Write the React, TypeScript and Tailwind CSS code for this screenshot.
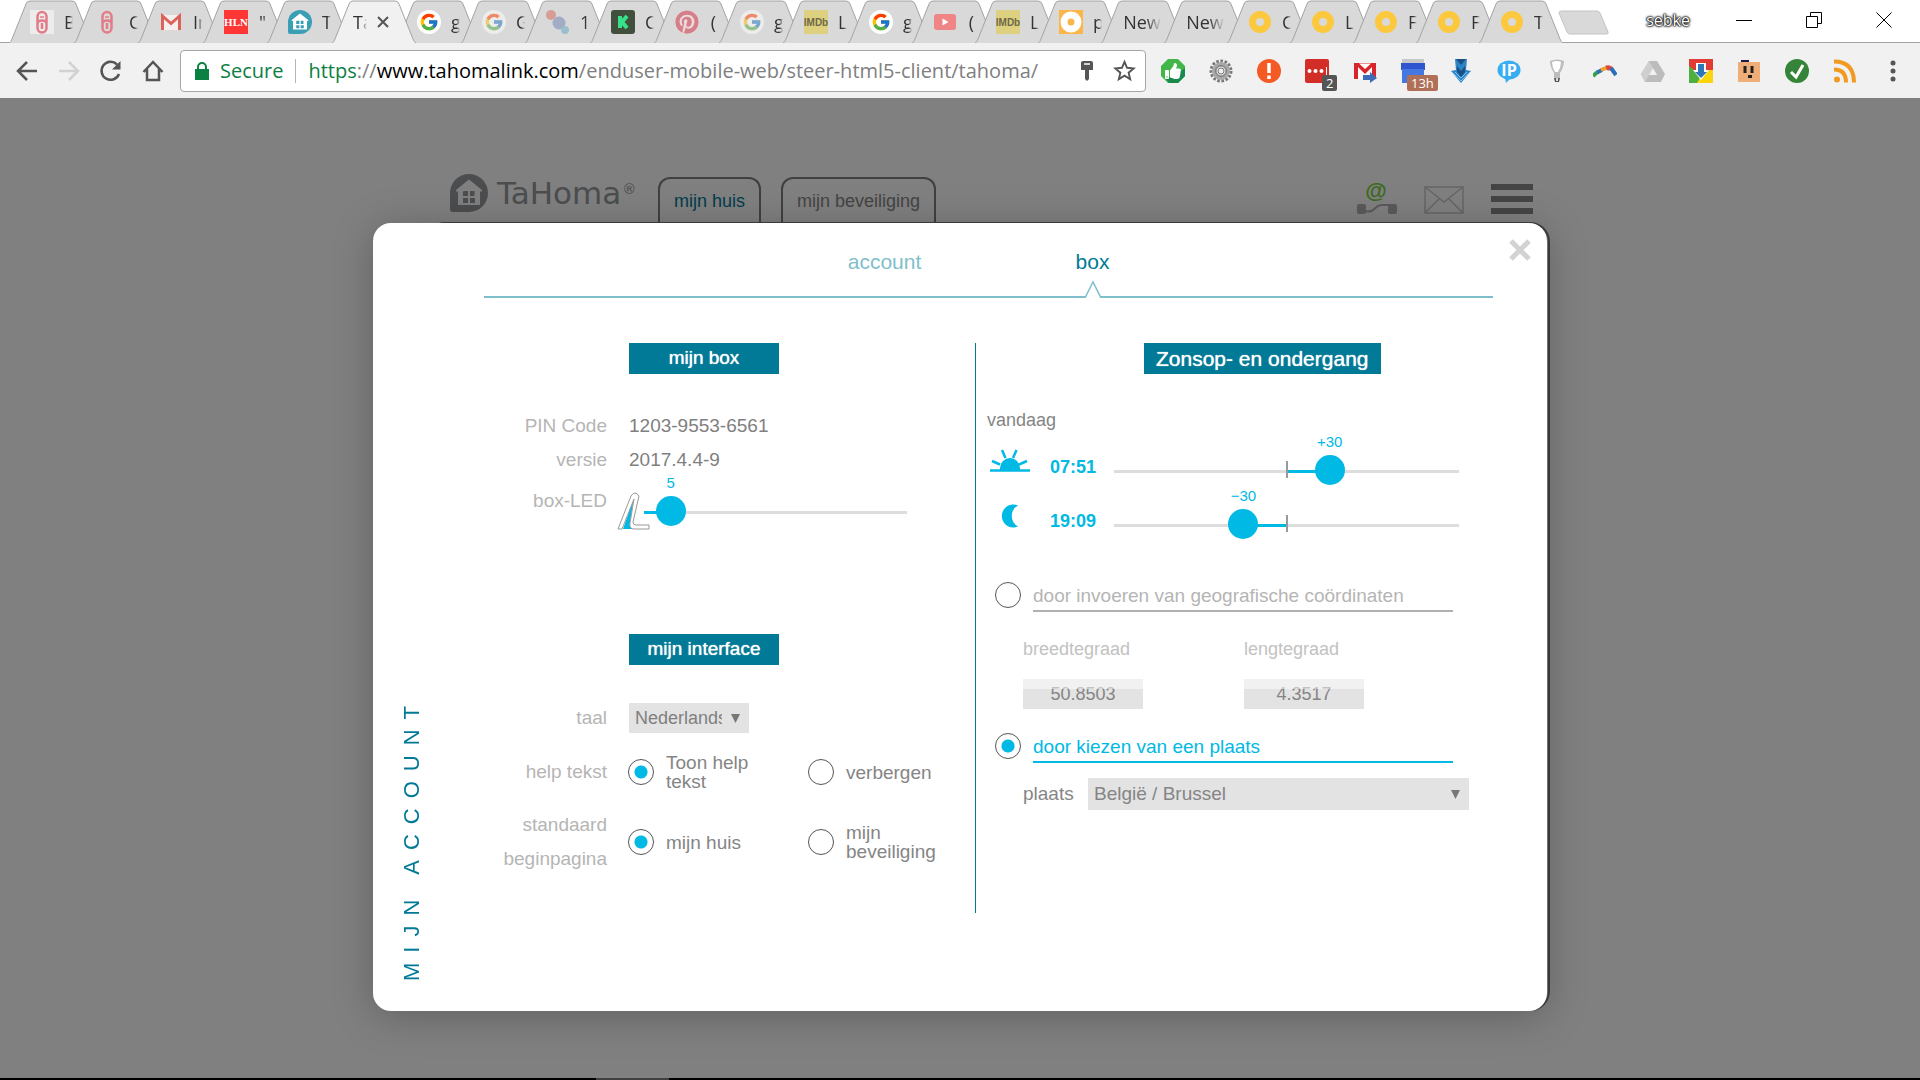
import React, { useState } from 'react';
import { FcGoogle } from 'react-icons/fc';
import { FaPinterest, FaThumbsUp } from 'react-icons/fa';

type TabItem = {
  title: string;
  icon?: React.ReactNode;
  active?: boolean;
};

const Clip = () => (
  <svg viewBox="0 0 24 24" className="size-6">
    <path
      d="M7.500 14V6.500a4.500 4.500 0 0 1 9 0V18a4.500 4.500 0 0 1-9 0v-4a4.500 3.500 0 0 1 9 0M12 13v6"
      fill="none"
      stroke="#e27c88"
      strokeWidth="2.500"
    />
    <path d="M10 7h4" stroke="#e27c88" strokeWidth="1.500" />
  </svg>
);

const Gmail = () => (
  <svg viewBox="0 0 24 24" className="size-6">
    <path d="M2 5h20v15H2z" fill="#f4efee" />
    <path d="M3.500 20V6l8.500 7.500L20.500 6v14" fill="none" stroke="#dc6158" strokeWidth="3" />
  </svg>
);

const Google = ({ faded = false }) => (
  <span
    className={`flex size-6 items-center justify-center rounded-full bg-white ${
      faded ? 'opacity-50' : ''
    }`}
  >
    <FcGoogle className="size-5" />
  </span>
);

const Imdb = () => (
  <span className="flex size-6 items-center justify-center overflow-hidden bg-[#ddd07e] font-['Liberation_Sans'] text-[10px] font-bold text-[#6d6848]">
    IMDb
  </span>
);

const Ring = () => (
  <svg viewBox="0 0 24 24" className="size-6">
    <circle cx="12" cy="12" r="7.500" fill="none" stroke="#fcc83e" strokeWidth="7" />
  </svg>
);

const House = ({ className = '', color = '#3a9fb4', inner = '#ffffff' }) => (
  <svg viewBox="0 0 38 38" className={className}>
    <path d="M19 0a19 19 0 0 1 0 38H3q-3 0-3-3V19A19 19 0 0 1 19 0z" fill={color} />
    <path d="M19 5.500 32 16v1.500h-2V31H8V17.500H6V16z" fill={inner} />
    <path
      d="M13.500 17h4.500v5h-5v-4zM20 17h4.500v5H20zM13 24h5v5h-5zM20 24h5v5h-5z"
      fill={color}
    />
  </svg>
);

const tabs: TabItem[] = [
  { title: 'B', icon: <span className="block bg-[#ececec]"><Clip /></span> },
  { title: 'C', icon: <Clip /> },
  { title: 'In', icon: <Gmail /> },
  {
    title: '"',
    icon: (
      <span className="flex size-6 items-center justify-center bg-[#ff3636] font-['Liberation_Serif'] text-[11px] font-bold text-white">
        HLN
      </span>
    )
  },
  { title: 'T', icon: <House className="size-6" /> },
  { title: 'Ta', active: true },
  { title: 'g', icon: <Google /> },
  { title: 'G', icon: <Google faded /> },
  {
    title: '1',
    icon: (
      <svg viewBox="0 0 24 24" className="size-6">
        <circle cx="5" cy="5" r="5" fill="#d79c94" />
        <circle cx="13" cy="13" r="6.500" fill="#a3acc6" />
        <circle cx="19" cy="20" r="4" fill="#9bbfcc" />
      </svg>
    )
  },
  {
    title: 'C',
    icon: (
      <svg viewBox="0 0 24 24" className="size-6">
        <rect width="24" height="24" rx="3" fill="#41503c" />
        <path d="M9 6v12M16 6l-5 6 5 6" fill="none" stroke="#37e28a" strokeWidth="4" />
      </svg>
    )
  },
  { title: '(', icon: <FaPinterest className="size-6 rounded-full bg-[#eed8da] text-[#d4808a]" /> },
  { title: 'g', icon: <Google faded /> },
  { title: 'L', icon: <Imdb /> },
  { title: 'g', icon: <Google /> },
  {
    title: '(',
    icon: (
      <svg viewBox="0 0 24 24" className="size-6">
        <rect x="1" y="4" width="22" height="16" rx="3" fill="#ef8585" />
        <path d="M9.500 8.500v7l6-3.500z" fill="#fff" />
      </svg>
    )
  },
  { title: 'L', icon: <Imdb /> },
  {
    title: 'p',
    icon: (
      <svg viewBox="0 0 24 24" className="size-6">
        <path d="M0 0h24v24H0z" fill="#fbb649" />
        <circle cx="12" cy="12" r="7" fill="none" stroke="#fff" strokeWidth="7" />
      </svg>
    )
  },
  { title: 'New' },
  { title: 'New' },
  { title: 'C', icon: <Ring /> },
  { title: 'L', icon: <Ring /> },
  { title: 'F', icon: <Ring /> },
  { title: 'F', icon: <Ring /> },
  { title: 'T', icon: <Ring /> }
];

const tabWidth = (index: number) => {
  if (index > 13) return 'w-[63px]';
  return index % 2 === 0 ? 'w-[65px]' : 'w-[64px]';
};

const BrowserTab = ({ tab, index }: { tab: TabItem; index: number }) => (
  <div
    className={`relative h-[43px] shrink-0 ${tabWidth(index)} ${tab.active ? 'z-10' : ''}`}
  >
    <svg
      viewBox="0 0 84 43"
      className="absolute top-0 left-0 h-[43px] w-[84px]"
      fill={tab.active ? '#f1f1f1' : '#d9d9d9'}
      stroke="#a3a3a3"
    >
      <path d="M0 43C2 42 2 41 3 39L17 4q1-3 4-3h42q3 0 4 3l14 35q1 3 3 4" />
    </svg>
    <button
      type="button"
      className="relative flex h-full w-[72px] items-center gap-[10px] pt-px pl-[21px] text-[18px] whitespace-nowrap text-[#333]"
    >
      {tab.icon && <span className="shrink-0">{tab.icon}</span>}
      <span
        className={`overflow-hidden mask-r-from-60% ${
          tab.icon ? 'w-[9px]' : tab.active ? 'w-[14px]' : 'w-10'
        }`}
      >
        {tab.title}
      </span>
      {tab.active && (
        <svg viewBox="0 0 12 12" className="size-3 shrink-0">
          <path d="m1 1 10 10M11 1 1 11" stroke="#555" strokeWidth="2" />
        </svg>
      )}
    </button>
  </div>
);

const TabStrip = () => (
  <div className="flex h-[43px] justify-between border-b border-[#a3a3a3] bg-white">
    <div className="flex pl-[9px]">
      {tabs.map((tab, index) => (
        <BrowserTab key={index} tab={tab} index={index} />
      ))}
      <button type="button" aria-label="New tab" className="mt-[10px] ml-4 h-[26px]">
        <svg viewBox="0 0 52 26" className="h-[26px] w-[52px]">
          <path
            d="M3 1h36q2 0 3 2l8 19q1 2-2 2H12q-2 0-3-2L1 3q0-2 2-2z"
            fill="#d9d9d9"
            stroke="#c4c4c4"
          />
        </svg>
      </button>
    </div>
    <div className="flex items-start pt-[10px] pr-7">
      <span className="mr-[46px] text-[16px] leading-5 text-white [text-shadow:0_0_1px_#000,0_0_2px_#000,0_0_2px_#000,0_0_3px_#000]">
        sebke
      </span>
      <div className="flex gap-[54px] pt-[2px]">
        <button type="button" aria-label="Minimize">
          <svg viewBox="0 0 16 16" className="size-4">
            <path d="M0 8.500h16" stroke="#000" />
          </svg>
        </button>
        <button type="button" aria-label="Restore">
          <svg viewBox="0 0 16 16" className="size-4" fill="none" stroke="#000">
            <path d="M.5 4.500h11v11H.5zM4.500 4V.5h11v11H12" />
          </svg>
        </button>
        <button type="button" aria-label="Close window">
          <svg viewBox="0 0 16 16" className="size-4">
            <path d="m.5.500 15 15M15.500.500l-15 15" stroke="#000" />
          </svg>
        </button>
      </div>
    </div>
  </div>
);

type Extension = { name: string; icon: React.ReactNode; badge?: string; badgeColor?: string };

const extensions: Extension[] = [
  {
    name: 'Adblock',
    icon: (
      <span className="relative flex size-6 items-center justify-center">
        <svg viewBox="0 0 24 24" className="absolute inset-0 size-6">
          <path d="M7 0h10l7 7v10l-7 7H7l-7-7V7z" fill="#43b649" />
          <path d="m24 9v8l-7 7H8L5 20l15-8z" fill="#178a4c" />
        </svg>
        <FaThumbsUp className="relative size-4 text-white" />
      </span>
    )
  },
  {
    name: 'Settings',
    icon: (
      <svg viewBox="0 0 24 24" className="size-6" fill="none">
        <circle cx="12" cy="12" r="10" stroke="#777" strokeWidth="3" strokeDasharray="2.600 1.600" />
        <circle cx="12" cy="12" r="6.500" stroke="#a9a9a9" strokeWidth="5" />
        <circle cx="12" cy="12" r="5.500" stroke="#7c7c7c" />
        <circle cx="12" cy="12" r="3" fill="#eee" stroke="#777" />
      </svg>
    )
  },
  {
    name: 'Alert',
    icon: (
      <svg viewBox="0 0 24 24" className="size-6">
        <circle cx="12" cy="12" r="12" fill="#f45a24" />
        <path d="M12 4v10M12 16.500v3.500" stroke="#fff" strokeWidth="3.500" />
      </svg>
    )
  },
  {
    name: 'Passwords',
    badge: '2',
    badgeColor: 'bg-[#555]',
    icon: (
      <svg viewBox="0 0 24 24" className="size-6">
        <rect width="24" height="24" rx="2" fill="#d32d27" />
        <circle cx="4.500" cy="12" r="2" fill="#fff" />
        <circle cx="10.500" cy="12" r="2" fill="#fff" />
        <circle cx="16.500" cy="12" r="2" fill="#fff" />
        <path d="M21.500 8v8" stroke="#fff" />
      </svg>
    )
  },
  {
    name: 'Mail',
    icon: (
      <svg viewBox="0 0 24 24" className="size-6">
        <path d="M1 4h22v16H1z" fill="#d8252b" />
        <path d="M5 20V8l7 7 7-7v12zM6 4.500h12L12 10z" fill="#fff" />
        <path d="M10 16h7v-3l7 6-7 5v-3h-7z" fill="#3d6db8" />
      </svg>
    )
  },
  {
    name: 'Calendar',
    badge: '13h',
    badgeColor: 'bg-[#b07058]',
    icon: (
      <svg viewBox="0 0 24 24" className="size-6">
        <path d="M1 0h22v5H1z" fill="#c8c8c8" />
        <path d="M0 4h24v7H0z" fill="#2f55cf" />
        <path d="M1 10h22v14H1z" fill="#4478e0" />
      </svg>
    )
  },
  {
    name: 'Download',
    icon: (
      <svg viewBox="0 0 24 24" className="size-6">
        <path d="M6 0h12l-1 11 5 1-10 12L2 12l5-1z" fill="#2c84c4" />
        <path d="M7 0h10l-5 6zM8 7l4 5 4-5v6l-4 5-4-5z" fill="#1c4f86" />
        <path d="m3 13 9 9 9-9M6 13l6 6 6-6" fill="none" stroke="#74c6ee" />
      </svg>
    )
  },
  {
    name: 'IP address',
    icon: (
      <svg viewBox="0 0 24 24" className="size-6">
        <ellipse cx="12" cy="11" rx="11.500" ry="9.500" fill="#38aef2" />
        <path d="m8 19 1 5 5-5z" fill="#38aef2" />
        <text x="12" y="17" textAnchor="middle" fontSize="16" fontWeight="700" fill="#fff">
          IP
        </text>
      </svg>
    )
  },
  {
    name: 'Lights',
    icon: (
      <svg viewBox="0 0 24 24" className="size-6">
        <path d="M5 2q7-3 14 0 0 6-4 12v5H9v-5Q5 8 5 2z" fill="#bdbdbd" />
        <path d="M7 3q5-2 9 0 0 5-3 10h-3Q7 8 7 3z" fill="#fff" />
        <path d="M9 19h6l-1 4h-4z" fill="#555" />
        <path d="M11 19h2v3h-2z" fill="#ddd" />
      </svg>
    )
  },
  {
    name: 'Boomerang',
    icon: (
      <svg viewBox="0 0 24 24" className="size-6" fill="none" strokeWidth="4">
        <path d="M0 17q3-3 5-4" stroke="#35a04a" />
        <path d="M4 13.500 9 11" stroke="#2c6fb5" />
        <path d="m8 11 5-2" stroke="#f2a22c" />
        <path d="M13 9q3-1 5 1" stroke="#d94a3a" strokeWidth="5" />
        <path d="m18 9 5 7" stroke="#2c6fb5" />
      </svg>
    )
  },
  {
    name: 'Drive',
    icon: (
      <svg viewBox="0 0 24 24" className="size-6">
        <path d="M8 2h8l8 13-4 8H4l-4-8z" fill="#bcbcbc" />
        <path d="m8 2 4 7-8 14-4-8z" fill="#cfcfcf" />
        <path d="m12 9 4 7H8z" fill="#f1f1f1" />
      </svg>
    )
  },
  {
    name: 'Chrome downloads',
    icon: (
      <svg viewBox="0 0 24 24" className="size-6">
        <path d="M0 0h24v11H0z" fill="#e23a35" />
        <path d="m0 7 12 9-3 8H0z" fill="#4caf3f" />
        <path d="M24 11v13H8l8-13z" fill="#fdd50f" />
        <path d="M7 4h10v7h3l-8 10-8-10h3z" fill="#fff" />
        <path d="M9 5h6v8h3l-6 6-6-6h3z" fill="#2f76b9" />
      </svg>
    )
  },
  {
    name: 'Box',
    icon: (
      <svg viewBox="0 0 24 24" className="size-6">
        <path d="M4 1h8v3H4z" fill="#1b1b4b" />
        <path d="M1 3h22v20H1z" fill="#efae78" />
        <path d="M8 7v7M15 7v7" stroke="#222" strokeWidth="3" />
        <path d="M11 16h4v3h-4z" fill="#222" />
      </svg>
    )
  },
  {
    name: 'Check',
    icon: (
      <svg viewBox="0 0 24 24" className="size-6">
        <circle cx="12" cy="12" r="12" fill="#36843a" />
        <path d="m6 13 5 5 7-12" fill="none" stroke="#fff" strokeWidth="3" />
      </svg>
    )
  },
  {
    name: 'RSS',
    icon: (
      <svg viewBox="0 0 24 24" className="size-6">
        <circle cx="4" cy="20.500" r="3" fill="#f19a22" />
        <path d="M1 10.500q12 0 12 13M1 2.500q20 0 20 21" fill="none" stroke="#f19a22" strokeWidth="4" />
      </svg>
    )
  }
];

const Toolbar = () => (
  <div className="flex h-[57px] items-center border-b-2 border-[#808080] bg-[#f1f1f1] pr-[3px] pl-[15px]">
    <div className="flex gap-[18px] pr-[15px] text-[#555]">
      <button type="button" aria-label="Back">
        <svg viewBox="0 0 24 24" className="size-6" fill="none" stroke="currentColor" strokeWidth="2.500">
          <path d="M22 12H3M12 3l-9 9 9 9" />
        </svg>
      </button>
      <button type="button" aria-label="Forward" className="text-[#d2d2d2]">
        <svg viewBox="0 0 24 24" className="size-6" fill="none" stroke="currentColor" strokeWidth="2.500">
          <path d="M2 12h19M12 3l9 9-9 9" />
        </svg>
      </button>
      <button type="button" aria-label="Reload">
        <svg viewBox="0 0 24 24" className="size-6" fill="none" stroke="currentColor" strokeWidth="2.500">
          <path d="M20 15a9 9 0 1 1-2-9.500" />
          <path d="M21.500 2v8.500H13z" fill="currentColor" stroke="none" />
        </svg>
      </button>
      <button type="button" aria-label="Home">
        <svg viewBox="0 0 24 24" className="size-6" fill="none" stroke="currentColor" strokeWidth="2.500">
          <path d="M2.500 13 12 3l9.500 10M6 10v11h12V10" />
        </svg>
      </button>
    </div>
    <div className="flex h-[42px] flex-1 items-center rounded-[4px] border border-[#a6a6a6] bg-white pr-[9px] pl-[14px] text-[20px] text-[#808080]">
      <svg viewBox="0 0 14 18" className="mr-[11px] h-[18px] w-[14px]">
        <path d="M0 7h14v11H0z" fill="#0b8043" />
        <path d="M3 8V5a4 4 0 0 1 8 0v3" fill="none" stroke="#0b8043" strokeWidth="2" />
      </svg>
      <span className="text-[#0b8043]">Secure</span>
      <span className="mx-3 h-6 w-px bg-[#b5b5b5]" />
      <a href="#tahoma" className="flex-1 overflow-hidden whitespace-nowrap">
        <span className="text-[#0b8043]">https</span>://
        <span className="text-black">www.tahomalink.com</span>
        /enduser-mobile-web/steer-html5-client/tahoma/
      </a>
      <button type="button" aria-label="Saved password" className="mr-[20px]">
        <svg viewBox="0 0 12 20" className="h-5 w-3">
          <path d="M0 2q0-2 2-2h8q2 0 2 2v7H8v9l-2 2-2-2V9H0z" fill="#555" />
          <path d="M3 3h6" stroke="#fff" strokeWidth="1.500" />
        </svg>
      </button>
      <button type="button" aria-label="Bookmark">
        <svg viewBox="0 0 24 24" className="size-[23px]">
          <path
            d="m12 3 2.700 6.200 6.800.600-5.200 4.500 1.600 6.700-5.900-3.600L6.100 21l1.600-6.700-5.200-4.500 6.800-.600z"
            fill="none"
            stroke="#555"
            strokeWidth="2"
          />
        </svg>
      </button>
    </div>
    <div className="flex pl-[3px]">
      {extensions.map((extension) => (
        <button
          key={extension.name}
          type="button"
          aria-label={extension.name}
          className="relative flex w-12 justify-center"
        >
          {extension.icon}
          {extension.badge && (
            <span
              className={`absolute top-4 left-[29px] rounded-[2px] px-1 text-[13px] leading-4 text-white ${
                extension.badge.length > 1 ? '-ml-[11px]' : ''
              } ${extension.badgeColor}`}
            >
              {extension.badge}
            </span>
          )}
        </button>
      ))}
      <button type="button" aria-label="Menu" className="flex w-12 justify-center">
        <svg viewBox="0 0 24 24" className="size-6" fill="#555">
          <circle cx="12" cy="4" r="2.500" />
          <circle cx="12" cy="12" r="2.500" />
          <circle cx="12" cy="20" r="2.500" />
        </svg>
      </button>
    </div>
  </div>
);

const SiteHeader = () => (
  <header className="flex h-[123px] w-full max-w-[1174px] items-end pr-[14px] pl-[77px]">
    <a href="#home" className="mb-[11px] flex items-center gap-[9px] text-[#4b4d4e]">
      <House className="size-[38px]" color="#4b4d4e" inner="#808080" />
      <span className="flex items-center font-['DejaVu_Sans'] text-[31px] leading-9">
        TaHoma<span className="ml-px pb-2 text-[14px] leading-5">®</span>
      </span>
    </a>
    <nav className="ml-auto flex gap-5 pr-[421px] text-[18px]">
      <a
        href="#huis"
        className="flex h-[46px] items-center rounded-t-[12px] border-2 border-b-0 border-[#404040] px-[14px] text-[#003d4b]"
      >
        mijn huis
      </a>
      <a
        href="#beveiliging"
        className="flex h-[46px] items-center rounded-t-[12px] border-2 border-b-0 border-[#404040] px-[14px] text-[#444]"
      >
        mijn beveiliging
      </a>
    </nav>
    <div className="mb-2 flex items-end gap-[27px]">
      <button type="button" aria-label="Verbinding">
        <svg viewBox="0 0 40 34" className="h-[34px] w-10">
          <text x="19" y="17" textAnchor="middle" fontSize="22" fontWeight="700" fill="#3b6b20">
            @
          </text>
          <path d="M8 30c10 3 10-7 17-6h8" fill="none" stroke="#5a5a5a" strokeWidth="2" />
          <rect y="23" width="9" height="10" rx="2" fill="#5a5a5a" />
          <rect x="31" y="23" width="9" height="10" rx="2" fill="#5a5a5a" />
        </svg>
      </button>
      <button type="button" aria-label="Berichten">
        <svg viewBox="0 0 40 29" className="h-[29px] w-10" fill="none" stroke="#666" strokeWidth="1.500">
          <path d="M1 1h38v26H1zM1 1l19 15L39 1M1 27l14-14M39 27 25 13" />
        </svg>
      </button>
      <button type="button" aria-label="Menu">
        <svg viewBox="0 0 42 32" className="h-8 w-[42px]">
          <path d="M0 4h42M0 16h42M0 28h42" stroke="#454545" strokeWidth="6" />
        </svg>
      </button>
    </div>
  </header>
);

type SliderProps = {
  label: string;
  min: number;
  max: number;
  initial: number;
  centered?: boolean;
};

const Slider = ({ label, min, max, initial, centered = false }: SliderProps) => {
  const [value, setValue] = useState(initial);
  const ratio = (value - min) / (max - min);
  const position = centered ? `${ratio * 100}%` : `calc(15px + (100% - 30px) * ${ratio})`;
  const sign = value < 0 ? '−' : value > 0 && centered ? '+' : '';
  const fill = centered
    ? {
        left: `${Math.min(ratio, 0.5) * 100}%`,
        width: `${Math.abs(ratio - 0.5) * 100}%`
      }
    : { left: 0, width: position };

  return (
    <div className="relative h-[30px] w-full">
      <div className="absolute inset-x-0 top-[15px] h-[3px] bg-[#ddd]" />
      <div className="absolute top-[15px] h-[3px] bg-[#00b9e4]" style={fill} />
      {centered && <div className="absolute top-[6px] left-1/2 -ml-px h-[17px] w-[2px] bg-[#999]" />}
      <output
        className="absolute -top-[23px] -translate-x-1/2 text-[15px] leading-5 text-[#00b9e4]"
        style={{ left: position }}
      >
        {sign}
        {Math.abs(value)}
      </output>
      <input
        type="range"
        aria-label={label}
        min={min}
        max={max}
        value={value}
        onChange={(e) => setValue(Number(e.target.value))}
        className={`absolute top-0 h-[30px] appearance-none bg-transparent [&::-webkit-slider-thumb]:size-[30px] [&::-webkit-slider-thumb]:appearance-none [&::-webkit-slider-thumb]:rounded-full [&::-webkit-slider-thumb]:bg-[#00b9e4] ${
          centered ? '-left-[15px] w-[calc(100%+30px)]' : 'left-0 w-full'
        }`}
      />
    </div>
  );
};

type RadioProps = {
  name: string;
  checked?: boolean;
  children: React.ReactNode;
};

const radioClass =
  'size-[26px] shrink-0 appearance-none rounded-full border border-[#555] checked:bg-[radial-gradient(circle,#00b9e4_6px,transparent_7px)]';

const Radio = ({ name, checked, children }: RadioProps) => (
  <label className="flex w-[180px] items-center gap-3 leading-[19px] text-[#858585]">
    <input type="radio" name={name} defaultChecked={checked} className={radioClass} />
    <span className="w-[96px]">{children}</span>
  </label>
);

const SectionTitle = ({ children }: { children: React.ReactNode }) => (
  <h2 className="flex h-[31px] min-w-[150px] items-center justify-center bg-[#007a96] px-3 text-white [text-shadow:0_0_1px_#fff]">
    {children}
  </h2>
);

const Row = ({ label, className, children }: { label: string; className: string; children: React.ReactNode }) => (
  <div className={`flex items-center ${className}`}>
    <span className="w-[123px] shrink-0 text-right leading-[34px] text-[#b5b5b5]">{label}</span>
    {children}
  </div>
);

const LedIcon = () => (
  <svg viewBox="0 0 33 38" className="h-[38px] w-[33px] shrink-0">
    <path d="M17 5 6 37h9l-2-6z" fill="#00b9e4" />
    <path
      d="M1 37 14 4q4-6 8 0l-6 26q0 3 3 3h13v4H16q-4-1-3-6l4-24L5 37z"
      fill="#fff"
      stroke="#999"
    />
  </svg>
);

const Arrow = () => (
  <svg viewBox="0 0 10 10" className="pointer-events-none absolute top-1/2 right-[9px] -mt-1 size-[9px]">
    <path d="M0 0h10L5 10z" fill="#777" />
  </svg>
);

const BoxSettings = () => (
  <section className="w-[491px] shrink-0 text-[19px]">
    <div className="flex pl-[145px]">
      <SectionTitle>mijn box</SectionTitle>
    </div>
    <div className="pt-[35px]">
      <Row label="PIN Code" className="h-[34px] gap-[22px]">
        <span className="text-[#808080]">1203-9553-6561</span>
      </Row>
      <Row label="versie" className="h-[34px] gap-[22px]">
        <span className="text-[#808080]">2017.4.4-9</span>
      </Row>
      <div className="flex h-12 items-center">
        <span className="w-[123px] shrink-0 text-right text-[#b5b5b5]">box-LED</span>
        <div className="relative ml-[37px] w-[263px] pt-5">
          <Slider label="box-LED" min={0} max={100} initial={5} />
          <div className="pointer-events-none absolute top-4 -left-[27px]">
            <LedIcon />
          </div>
        </div>
      </div>
    </div>
    <div className="flex pt-[109px] pl-[145px]">
      <SectionTitle>mijn interface</SectionTitle>
    </div>
    <div className="flex flex-col gap-[17px] pt-[35px]">
      <Row label="taal" className="h-9 gap-[22px]">
        <div className="relative">
          <select
            aria-label="taal"
            className="block h-[30px] w-[120px] appearance-none overflow-hidden bg-[#e3e3e3] pr-[27px] pl-[6px] text-[18px] text-[#808080]"
          >
            <option>Nederlands</option>
            <option>Français</option>
            <option>English</option>
          </select>
          <Arrow />
        </div>
      </Row>
      <Row label="help tekst" className="h-[38px] gap-[21px]">
        <div className="flex">
          <Radio name="help" checked>
            Toon help tekst
          </Radio>
          <Radio name="help">verbergen</Radio>
        </div>
      </Row>
      <Row label="standaard beginpagina" className="h-[68px] gap-[21px]">
        <div className="flex">
          <Radio name="start" checked>
            mijn huis
          </Radio>
          <Radio name="start">mijn beveiliging</Radio>
        </div>
      </Row>
    </div>
  </section>
);

const SunIcon = () => (
  <svg viewBox="0 0 40 23" className="h-[23px] w-10">
    <path d="M10 22V19a10 10 0 0 1 20 0v3z" fill="#00b9e4" />
    <path
      d="M0 21.500h40M2 12l8 3.500M37 12l-8 3.500M12 1l3.500 8M26.500 1 23 9"
      stroke="#00b9e4"
      strokeWidth="2.500"
    />
  </svg>
);

const MoonIcon = () => (
  <svg viewBox="0 0 17 24" className="h-6 w-[17px]">
    <path d="M17 1.500A11.500 11.500 0 1 0 17 22.500 12 12 0 0 1 17 1.500z" fill="#00b9e4" />
  </svg>
);

const TimeRow = ({ icon, time, label, initial }: { icon: React.ReactNode; time: string; label: string; initial: number }) => (
  <div className="flex h-[54px] items-center">
    {icon}
    <span className="w-16 shrink-0 pb-[6px] text-[18px] font-bold text-[#00b9e4]">{time}</span>
    <div className="w-[345px]">
      <Slider label={label} min={-120} max={120} initial={initial} centered />
    </div>
  </div>
);

const Coordinate = ({ id, label, value }: { id: string; label: string; value: string }) => (
  <div className="flex w-[221px] flex-col gap-[18px] text-[18px]">
    <label htmlFor={id} className="leading-6 text-[#c2c2c2]">
      {label}
    </label>
    <div className="relative w-[120px]">
      <input
        id={id}
        type="text"
        defaultValue={value}
        className="block h-[30px] w-full bg-[#e3e3e3] text-center text-[#858585]"
      />
      <div className="pointer-events-none absolute inset-x-0 top-0 h-[10px] bg-white/50" />
    </div>
  </div>
);

const SunSettings = () => (
  <section className="flex-1 border-l border-[#007a96] pb-9 pl-[11px]">
    <div className="flex pl-[157px] text-[21px]">
      <SectionTitle>Zonsop- en ondergang</SectionTitle>
    </div>
    <p className="pt-[34px] pb-[11px] text-[18px] leading-6 text-[#858585]">vandaag</p>
    <TimeRow
      icon={
        <span className="w-[63px] pb-5 pl-[3px]">
          <SunIcon />
        </span>
      }
      time="07:51"
      label="zonsopgang"
      initial={30}
    />
    <TimeRow
      icon={
        <span className="w-[63px] pb-4 pl-[14px]">
          <MoonIcon />
        </span>
      }
      time="19:09"
      label="zonsondergang"
      initial={-30}
    />
    <label className="mt-[31px] flex gap-3 pl-2 text-[19px] leading-7 text-[#b5b5b5]">
      <input type="radio" name="location" className={radioClass} />
      <span className="w-[420px] border-b-2 border-[#b0b0b0]">
        door invoeren van geografische coördinaten
      </span>
    </label>
    <div className="flex pt-[25px] pl-9">
      <Coordinate id="latitude" label="breedtegraad" value="50.8503" />
      <Coordinate id="longitude" label="lengtegraad" value="4.3517" />
    </div>
    <label className="mt-6 flex gap-3 pl-2 text-[19px] leading-7 text-[#00b9e4]">
      <input type="radio" name="location" defaultChecked className={radioClass} />
      <span className="w-[420px] border-b-2 border-[#00b9e4]">door kiezen van een plaats</span>
    </label>
    <div className="flex items-center pt-[15px] pl-9 text-[19px] text-[#858585]">
      <label htmlFor="place" className="w-[65px]">
        plaats
      </label>
      <div className="relative w-[381px]">
        <select id="place" className="block h-8 w-full appearance-none bg-[#e3e3e3] pr-7 pl-[6px]">
          <option>België / Brussel</option>
          <option>België / Antwerpen</option>
        </select>
        <Arrow />
      </div>
    </div>
  </section>
);

const AccountDialog = () => (
  <div className="relative w-full max-w-[1174px]">
    <div className="absolute -top-px -right-[3px] bottom-0 left-[52px] rounded-[20px] border-2 border-[#404040]" />
    <div
      role="dialog"
      aria-label="Mijn account"
      className="relative flex rounded-[18px] bg-white pr-[54px] shadow-[0_5px_40px_rgba(0,0,0,0.25)]"
    >
      <button type="button" aria-label="Sluiten" className="absolute top-4 right-4">
        <svg viewBox="0 0 22 22" className="size-[22px]">
          <path d="m2 2 18 18M20 2 2 20" stroke="#d2d2d2" strokeWidth="5" />
        </svg>
      </button>
      <aside className="flex w-[111px] shrink-0 items-end pb-[30px] pl-[27px]">
        <h1 className="rotate-180 text-[22px] leading-6 tracking-[10px] text-[#007a96] [writing-mode:vertical-rl]">
          MIJN ACCOUNT
        </h1>
      </aside>
      <div className="flex-1 pb-[98px]">
        <nav className="flex h-[75px] justify-center border-b-2 border-[#7fbfcb] text-[21px]">
          <a href="#account" className="w-[208px] pt-[23px] text-center leading-8 text-[#7fbfcb]">
            account
          </a>
          <a href="#box" className="relative w-[208px] pt-[23px] text-center leading-8 text-[#007a96]">
            box
            <svg viewBox="0 0 16 18" className="absolute -bottom-[2px] left-24 h-[18px] w-4">
              <path d="M0 18 8 2l8 16z" fill="#fff" />
              <path d="M0 18 8 2l8 16" fill="none" stroke="#7fbfcb" strokeWidth="1.500" />
            </svg>
          </a>
        </nav>
        <div className="flex min-h-[615px] pt-[45px]">
          <BoxSettings />
          <SunSettings />
        </div>
      </div>
    </div>
  </div>
);

const App = () => (
  <div className="flex min-h-screen flex-col overflow-x-hidden bg-[#808080] font-['Open_Sans',sans-serif]">
    <TabStrip />
    <Toolbar />
    <main className="flex flex-1 flex-col items-center font-['Liberation_Sans',Arial,sans-serif]">
      <SiteHeader />
      <AccountDialog />
    </main>
    <div className="h-[2px] bg-black pl-[596px]">
      <div className="h-full w-[73px] bg-[#404040]" />
    </div>
  </div>
);

export default App;
